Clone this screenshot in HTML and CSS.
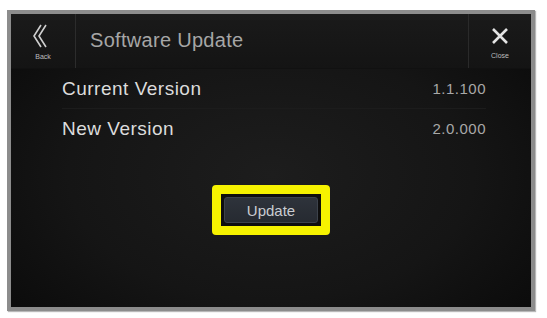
FILE: index.html
```html
<!DOCTYPE html>
<html lang="en">
<head>
    <meta charset="UTF-8">
    <title>Software Update</title>
    <link rel="stylesheet" href="styles.css">
</head>
<body>
    <div class="screen">
        <header class="topbar">
            <div class="nav-btn back">
                <svg width="18" height="24" viewBox="0 0 18 24">
                    <polyline points="9,1 2,12 9,23" fill="none" stroke="#cfcfcf" stroke-width="1.6"/>
                    <polyline points="14,1 7,12 14,23" fill="none" stroke="#cfcfcf" stroke-width="1.6"/>
                </svg>
                <span class="nav-label">Back</span>
            </div>
            <h1 class="title">Software Update</h1>
            <div class="nav-btn close">
                <svg width="18" height="16" viewBox="0 0 18 16">
                    <path d="M2 1 L16 15 M16 1 L2 15" stroke="#e4e4e4" stroke-width="2.6"/>
                </svg>
                <span class="nav-label">Close</span>
            </div>
        </header>
        <div class="rows">
            <div class="row">
                <span class="label">Current Version</span>
                <span class="value">1.1.100</span>
            </div>
            <div class="row">
                <span class="label">New Version</span>
                <span class="value">2.0.000</span>
            </div>
        </div>
        <div class="actions">
            <div class="highlight">
                <button class="update-btn">Update</button>
            </div>
        </div>
    </div>
</body>
</html>
```

FILE: styles.css
```css
body {
    margin: 0;
    background: #fff;
    font-family: "Liberation Sans", Arial, sans-serif;
}
.screen {
    margin: 10px 12px 7px 7px;
    width: 520px;
    height: 293px;
    border: 4px solid #8c8c8c;
    box-shadow: 1px 1px 1px #b8b8b8;
    background: radial-gradient(ellipse at 50% 55%, #1d1d1d 0%, #151515 55%, #090909 100%);
    display: flex;
    flex-direction: column;
}
.topbar {
    height: 54px;
    display: flex;
    align-items: stretch;
    background: linear-gradient(#1a1a1a, #141414);
    border-bottom: 1px solid #111;
}
.nav-btn {
    width: 64px;
    display: flex;
    flex-direction: column;
    align-items: center;
    justify-content: center;
}
.back {
    border-right: 1px solid #2c2c2c;
    padding-top: 2px;
}
.back svg {
    margin-left: -4px;
}
.close {
    width: 62px;
    margin-left: auto;
    border-left: 1px solid #2a2a2a;
    padding-top: 4px;
}
.nav-label {
    font-size: 7px;
    color: #bdbdbd;
    margin-top: 5px;
}
.close .nav-label {
    margin-top: 8px;
}
.title {
    margin: 0 0 0 14px;
    font-size: 20px;
    letter-spacing: 0.3px;
    font-weight: normal;
    color: #a6a6a6;
    align-self: center;
    padding-bottom: 1px;
}
.rows {
    padding: 0 45px 0 51px;
}
.row {
    height: 39px;
    display: flex;
    align-items: center;
    justify-content: space-between;
    border-bottom: 1px solid #1c1c1c;
}
.row:last-child {
    border-bottom: none;
}
.label {
    font-size: 19px;
    letter-spacing: 0.5px;
    color: #dcdcdc;
}
.value {
    font-size: 15px;
    letter-spacing: 0.5px;
    color: #a8a8a8;
}
.actions {
    display: flex;
    justify-content: center;
    margin-top: 37px;
}
.highlight {
    border: 9px solid #f6f200;
    border-radius: 4px;
    padding: 3px;
    background: #0e0e0e;
}
.update-btn {
    width: 94px;
    height: 26px;
    background: linear-gradient(#2e333b, #262a31);
    border: 1px solid #3c424b;
    border-radius: 3px;
    color: #c9ccd1;
    font-family: "Liberation Sans", Arial, sans-serif;
    font-size: 15px;
    display: block;
}
```
